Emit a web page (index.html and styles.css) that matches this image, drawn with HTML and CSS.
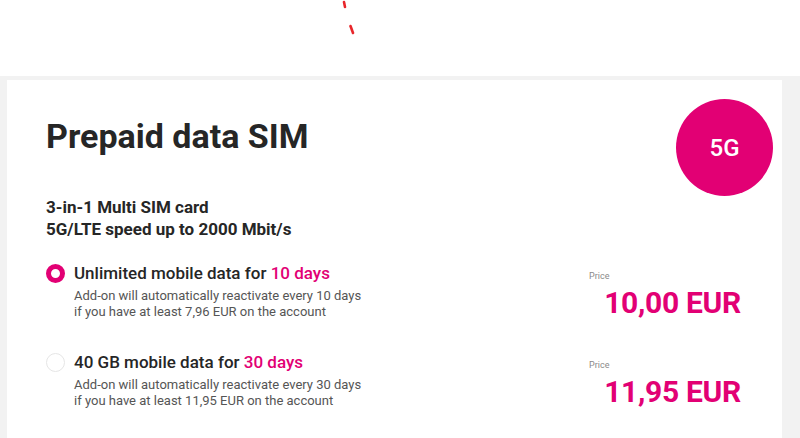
FILE: index.html
```html
<!DOCTYPE html>
<html lang="en">
<head>
<meta charset="utf-8">
<title>Prepaid data SIM</title>
<link rel="stylesheet" href="styles.css">
</head>
<body>
<header class="top">
  <svg class="spinner" width="20" height="40" viewBox="0 0 20 40" aria-hidden="true">
    <line x1="4" y1="2" x2="5" y2="7" stroke="#e8262b" stroke-width="2.6" stroke-linecap="round"/>
    <line x1="10.5" y1="26" x2="13" y2="33" stroke="#e8262b" stroke-width="2.6" stroke-linecap="round"/>
  </svg>
</header>
<main class="band">
  <section class="card">
    <div class="head">
      <div class="intro">
        <h1 class="title">Prepaid data SIM</h1>
        <p class="features">3-in-1 Multi SIM card<br>5G/LTE speed up to 2000 Mbit/s</p>
      </div>
      <div class="badge">5G</div>
    </div>
    <ul class="options">
      <li class="option">
        <span class="radio radio-on"></span>
        <div class="opt-text">
          <div class="opt-name">Unlimited mobile data for <span class="hl">10 days</span></div>
          <div class="opt-desc">Add-on will automatically reactivate every 10 days<br>if you have at least 7,96 EUR on the account</div>
        </div>
        <div class="price">
          <div class="price-label">Price</div>
          <div class="price-value">10,00 EUR</div>
        </div>
      </li>
      <li class="option">
        <span class="radio"></span>
        <div class="opt-text">
          <div class="opt-name">40 GB mobile data for <span class="hl">30 days</span></div>
          <div class="opt-desc">Add-on will automatically reactivate every 30 days<br>if you have at least 11,95 EUR on the account</div>
        </div>
        <div class="price">
          <div class="price-label">Price</div>
          <div class="price-value">11,95 EUR</div>
        </div>
      </li>
    </ul>
  </section>
</main>
</body>
</html>
```
FILE: styles.css
```css
html, body {
  margin: 0;
  padding: 0;
  background: #ffffff;
  font-family: Roboto, "Liberation Sans", sans-serif;
  color: #262626;
}
.top {
  height: 76px;
  position: relative;
  background: #ffffff;
}
.spinner {
  position: absolute;
  left: 340px;
  top: 0;
}
.band {
  background: #f2f2f2;
  padding: 4px 18px 0 7px;
  height: 362px;
  box-sizing: border-box;
}
.card {
  background: #ffffff;
  height: 100%;
  padding: 19px 9px 0 39px;
  box-sizing: border-box;
}
.head {
  display: flex;
  justify-content: space-between;
  align-items: flex-start;
}
.title {
  margin: 17px 0 0;
  font-size: 34px;
  font-weight: 700;
  line-height: 40px;
  color: #262626;
}
.features {
  margin: 40px 0 0;
  font-size: 17px;
  font-weight: 700;
  line-height: 22px;
}
.badge {
  width: 97px;
  height: 97px;
  border-radius: 50%;
  background: #e20074;
  color: #ffffff;
  display: flex;
  align-items: center;
  justify-content: center;
  font-size: 24px;
  font-weight: 500;
}
.options {
  list-style: none;
  margin: 22px 0 0;
  padding: 0 32px 0 0;
}
.option {
  display: flex;
  align-items: flex-start;
  margin-bottom: 30px;
}
.radio {
  width: 19px;
  height: 19px;
  border-radius: 50%;
  border: 1px solid #e6e6e6;
  box-sizing: border-box;
  margin: 2px 9px 0 0;
  flex: none;
}
.radio-on {
  border: 5.5px solid #e20074;
}
.opt-text {
  flex: 1;
}
.opt-name {
  font-size: 17px;
  font-weight: 500;
  line-height: 22px;
}
.hl {
  color: #e20074;
}
.opt-desc {
  margin-top: 4px;
  font-size: 13px;
  line-height: 16px;
  color: #555555;
}
.price {
  width: 152px;
  text-align: right;
  padding-top: 8px;
}
.price-label {
  text-align: left;
  font-size: 9px;
  color: #8a8a8a;
  line-height: 12px;
}
.price-value {
  margin-top: 3px;
  font-size: 30px;
  font-weight: 700;
  color: #e20074;
  line-height: 36px;
  letter-spacing: -0.3px;
}
```
